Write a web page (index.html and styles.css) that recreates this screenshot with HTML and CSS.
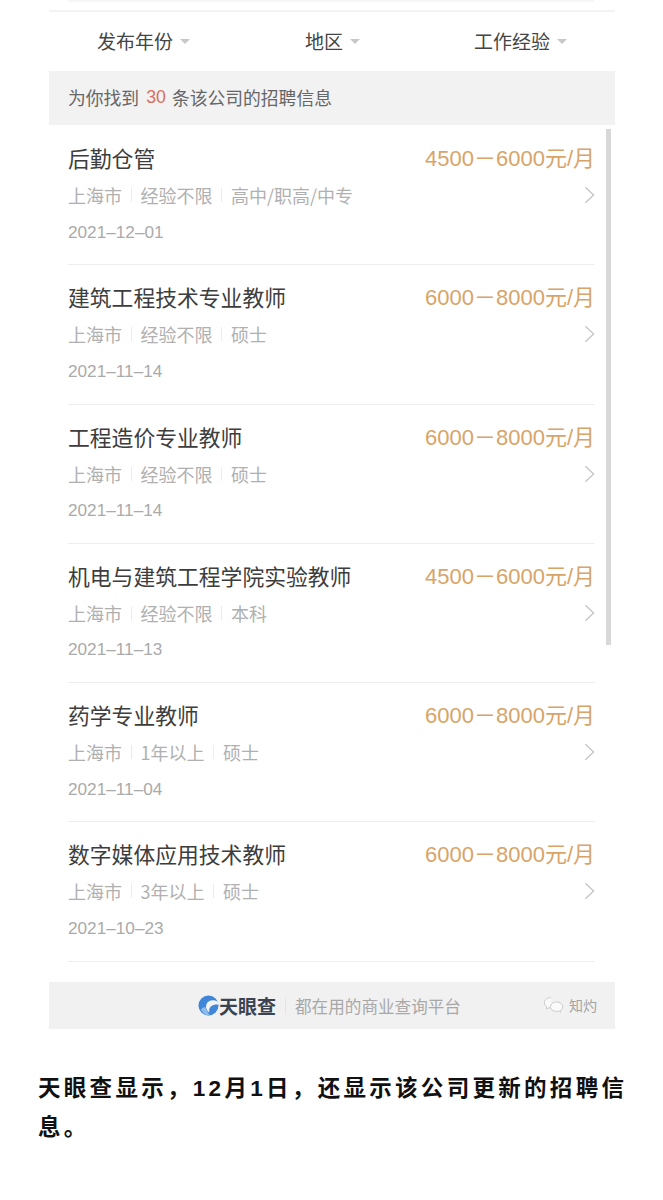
FILE: index.html
```html
<!DOCTYPE html>
<html lang="zh-CN">
<head>
<meta charset="utf-8">
<title>招聘信息</title>
<link rel="stylesheet" href="styles.css">
</head>
<body>
<main class="shot">
  <div class="card">
    <div class="stub"></div>
    <nav class="filters">
      <div class="filter filter-a">发布年份<span class="caret"></span></div>
      <div class="filter filter-b">地区<span class="caret"></span></div>
      <div class="filter filter-c">工作经验<span class="caret"></span></div>
    </nav>
    <div class="banner">为你找到<span class="count">30</span>条该公司的招聘信息</div>
    <div class="list">
      <div class="scrollbar"></div>
      <article class="job">
        <h3 class="title">后勤仓管</h3><div class="salary">4500<span class="dash">－</span>6000元/月</div>
        <div class="meta"><span>上海市</span><span>经验不限</span><span>高中/职高/中专</span></div>
        <svg class="chev" viewBox="0 0 12 20"><path d="M1.5 1.5 10.5 10 1.5 18.5"/></svg>
        <div class="date">2021–12–01</div>
      </article>
      <article class="job">
        <h3 class="title">建筑工程技术专业教师</h3><div class="salary">6000<span class="dash">－</span>8000元/月</div>
        <div class="meta"><span>上海市</span><span>经验不限</span><span>硕士</span></div>
        <svg class="chev" viewBox="0 0 12 20"><path d="M1.5 1.5 10.5 10 1.5 18.5"/></svg>
        <div class="date">2021–11–14</div>
      </article>
      <article class="job">
        <h3 class="title">工程造价专业教师</h3><div class="salary">6000<span class="dash">－</span>8000元/月</div>
        <div class="meta"><span>上海市</span><span>经验不限</span><span>硕士</span></div>
        <svg class="chev" viewBox="0 0 12 20"><path d="M1.5 1.5 10.5 10 1.5 18.5"/></svg>
        <div class="date">2021–11–14</div>
      </article>
      <article class="job">
        <h3 class="title">机电与建筑工程学院实验教师</h3><div class="salary">4500<span class="dash">－</span>6000元/月</div>
        <div class="meta"><span>上海市</span><span>经验不限</span><span>本科</span></div>
        <svg class="chev" viewBox="0 0 12 20"><path d="M1.5 1.5 10.5 10 1.5 18.5"/></svg>
        <div class="date">2021–11–13</div>
      </article>
      <article class="job">
        <h3 class="title">药学专业教师</h3><div class="salary">6000<span class="dash">－</span>8000元/月</div>
        <div class="meta"><span>上海市</span><span>1年以上</span><span>硕士</span></div>
        <svg class="chev" viewBox="0 0 12 20"><path d="M1.5 1.5 10.5 10 1.5 18.5"/></svg>
        <div class="date">2021–11–04</div>
      </article>
      <article class="job">
        <h3 class="title">数字媒体应用技术教师</h3><div class="salary">6000<span class="dash">－</span>8000元/月</div>
        <div class="meta"><span>上海市</span><span>3年以上</span><span>硕士</span></div>
        <svg class="chev" viewBox="0 0 12 20"><path d="M1.5 1.5 10.5 10 1.5 18.5"/></svg>
        <div class="date">2021–10–23</div>
      </article>
    </div>
    <footer class="brandbar">
      <svg class="logo" viewBox="0 0 22 22">
        <circle cx="11" cy="11" r="10.5" fill="#3f86d8"/>
        <path d="M21.5 7.500C17 4.500 11 5 9 9.500c-1.500 3.500 0 7 3 9-1-3 0-6 3-7.500 2.500-1.200 4.500-1.300 6.500-.5z" fill="#f2f2f2"/>
        <path d="M3 15c2-2 4-2.500 5-2 .5 2 2 5 4.500 8.500C8.500 22 5 19 3 15z" fill="#8fbcec"/>
      </svg>
      <span class="brandname">天眼查</span>
      <span class="brandsep"></span>
      <span class="slogan">都在用的商业查询平台</span>
      <span class="source">
        <svg class="wechat" viewBox="0 0 24 20">
          <path d="M9 1.500C4.800 1.500 1.500 4.200 1.500 7.500c0 2 1.200 3.600 3 4.700L4 14.500l2.600-1.300c.8.200 1.600.3 2.400.3"/>
          <path d="M15.500 6.500c3.900 0 7 2.500 7 5.500 0 1.700-1 3.100-2.500 4.100l.5 2-2.300-1.200c-.9.300-1.800.4-2.700.4-3.900 0-7-2.500-7-5.300s3.100-5.500 7-5.500z"/>
        </svg>
        <span>知灼</span>
      </span>
    </footer>
  </div>
  <p class="caption">天眼查显示，12月1日，还显示该公司更新的招聘信息。</p>
</main>
</body>
</html>
```
FILE: styles.css
```css
* { box-sizing: border-box; }
html, body { margin: 0; padding: 0; background: #fff; }
body { font-family: "Liberation Sans", "Noto Sans CJK SC", sans-serif; overflow: hidden; }
.shot { width: 663px; height: 1200px; }
.card { margin-left: 49px; width: 566px; }
.stub { height: 10px; margin: 0 21px 0 19px; }
.stub::before { content: ""; display: block; height: 2px; background: #f6f6f6; }
.filters {
  height: 61px; border-top: 2px solid #f3f3f3; padding-bottom: 2px; display: grid;
  grid-template-columns: 190px 170px 206px; align-items: center;
}
.filter { font-size: 19px; color: #444; display: flex; align-items: center; }
.filter-a { padding-left: 48px; }
.filter-b { padding-left: 66px; }
.filter-c { padding-left: 65px; }
.caret {
  width: 0; height: 0; margin-left: 7px; margin-top: 1px;
  border-left: 5px solid transparent; border-right: 5px solid transparent;
  border-top: 5px solid #c8c8c8;
}
.banner {
  height: 54px; background: #f2f2f2; padding: 0 0 2px 19px; display: flex; align-items: center;
  font-size: 17.800px; color: #666;
}
.count { color: #d9705f; margin: 0 6px 0 7px; }
.list { position: relative; padding: 1px 20px 0 19px; height: 836px; }
.scrollbar { position: absolute; right: 4px; top: 4px; width: 5px; height: 516px; background: #d8d8d8; }
.job {
  height: 139.3px; border-bottom: 1px solid #eeeeee; padding-top: 20px;
  display: grid; grid-template-columns: 1fr auto; grid-template-rows: 28px 42px 32px; align-items: center;
}
.title { margin: 0; font-size: 21.800px; font-weight: 400; color: #3d3d3d; line-height: 28px; }
.salary { font-size: 22px; color: #d8a468; line-height: 28px; white-space: nowrap; margin-top: -5px; }
.dash { font-family: "Noto Sans CJK SC", sans-serif; }
.meta { display: flex; align-items: center; font-family: "Noto Sans CJK SC", sans-serif; font-size: 18px; color: #b0b0b0; }
.meta span + span { margin-left: 8.500px; padding-left: 10px; position: relative; }
.meta span + span::before {
  content: ""; position: absolute; left: 0; top: 6px; bottom: 6px; width: 1px; background: #ececec;
}
.chev { width: 11px; height: 20px; justify-self: end; fill: none; stroke: #c6c6c6; stroke-width: 1.500; }
.date { grid-column: 1 / 3; font-size: 17.200px; color: #aaa; }
.brandbar {
  position: relative; height: 47px; margin-top: 21px; background: #f1f1f1;
  display: flex; align-items: center; padding-left: 149px;
}
.logo { width: 21px; height: 21px; }
.brandname { font-size: 19px; font-weight: 700; color: #3b4350; }
.brandsep { width: 1px; height: 16px; background: #e4e4e4; margin: 0 9px; }
.slogan { font-size: 16.600px; color: #a8a8a8; }
.source { position: absolute; right: 18px; top: 13px; display: flex; align-items: center; color: #a4a4a4; font-size: 14px; }
.wechat { width: 21px; height: 18px; margin-right: 5px; fill: #fafafa; stroke: #c4c4c4; stroke-width: 1; }
.caption {
  margin: 40px 30px 0 38px; font-size: 22.500px; line-height: 39px; font-weight: 700; color: #111;
  letter-spacing: 3.300px;
}
```
